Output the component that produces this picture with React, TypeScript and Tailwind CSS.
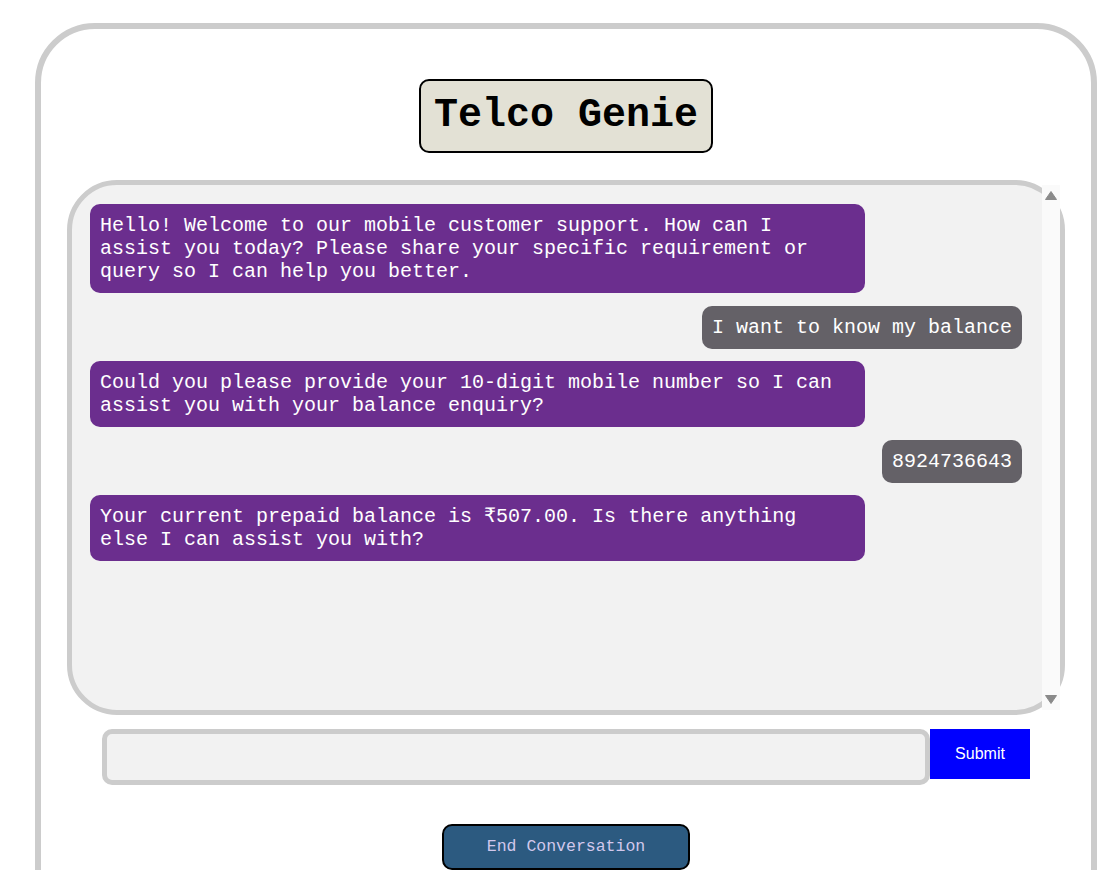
import React from 'react';

type Msg = { from: 'bot' | 'user'; text: string };

const messages: Msg[] = [
  {
    from: 'bot',
    text: 'Hello! Welcome to our mobile customer support. How can I assist you today? Please share your specific requirement or query so I can help you better.',
  },
  { from: 'user', text: 'I want to know my balance' },
  {
    from: 'bot',
    text: 'Could you please provide your 10-digit mobile number so I can assist you with your balance enquiry?',
  },
  { from: 'user', text: '8924736643' },
  {
    from: 'bot',
    text: 'Your current prepaid balance is ₹507.00. Is there anything else I can assist you with?',
  },
];

const mono = 'font-["Liberation_Mono","Courier_New",monospace]';

function Bubble({ msg }: { msg: Msg }) {
  const isBot = msg.from === 'bot';
  return (
    <div className={isBot ? 'flex justify-start' : 'flex justify-end'}>
      <div
        className={
          isBot
            ? `${mono} max-w-[775px] rounded-[10px] bg-[#6b2e8e] p-[10px] text-[20px] leading-[23px] text-white`
            : `${mono} rounded-[10px] bg-[#646167] p-[10px] text-[20px] leading-[23px] text-white`
        }
      >
        {msg.text}
      </div>
    </div>
  );
}

// static look of a classic scrollbar with nothing to scroll
function ScrollTrack() {
  return (
    <div className="flex w-[18px] shrink-0 flex-col items-center justify-between bg-[#fafafa] pb-[6px] pt-[6px]">
      <svg width="12" height="9" viewBox="0 0 12 9">
        <path d="M6 0.5 L11.5 8.5 L0.5 8.5 Z" fill="#8a8a8a" strokeLinejoin="round" stroke="#8a8a8a" strokeWidth="1" />
      </svg>
      <svg width="12" height="9" viewBox="0 0 12 9">
        <path d="M0.5 0.5 L11.5 0.5 L6 8.5 Z" fill="#8a8a8a" strokeLinejoin="round" stroke="#8a8a8a" strokeWidth="1" />
      </svg>
    </div>
  );
}

export default function App() {
  return (
    <div className="h-[870px] overflow-hidden bg-white">
      <div className="ml-[35px] mt-[23px] w-[1062px] rounded-[60px] border-[6px] border-[#cccccc] pb-[60px] pt-[50px]">
        <div className="flex justify-center">
          <h1
            className={`${mono} rounded-[10px] border-2 border-black bg-[#e3e1d5] px-[13px] py-[12px] text-[40px] font-bold leading-[46px] text-black`}
          >
            Telco Genie
          </h1>
        </div>

        <div className="mx-auto mt-[27px] flex h-[535px] w-[998px] rounded-[50px] border-[5px] border-[#cccccc] bg-[#f2f2f2]">
          <div className="flex min-w-0 flex-1 flex-col gap-[12.5px] pl-[18px] pr-[20px] pt-[19px]">
            {messages.map((m, i) => (
              <Bubble key={i} msg={m} />
            ))}
          </div>
          <ScrollTrack />
        </div>

        <div className="mt-[14px] flex items-start justify-center">
          <input
            type="text"
            className="h-[56px] w-[828px] rounded-[10px] border-[5px] border-[#cccccc] bg-[#f2f2f2] outline-none"
          />
          <button className='h-[50px] w-[100px] bg-[#0000ff] font-["Liberation_Sans",Arial,sans-serif] text-[16px] text-white'>
            Submit
          </button>
        </div>

        <div className="mt-[39px] flex justify-center">
          <button
            className={`${mono} h-[46px] w-[248px] rounded-[10px] border-2 border-black bg-[#2c5a80] pt-[1px] text-[16.5px] text-[#d2c8ec]`}
          >
            End Conversation
          </button>
        </div>
      </div>
    </div>
  );
}
